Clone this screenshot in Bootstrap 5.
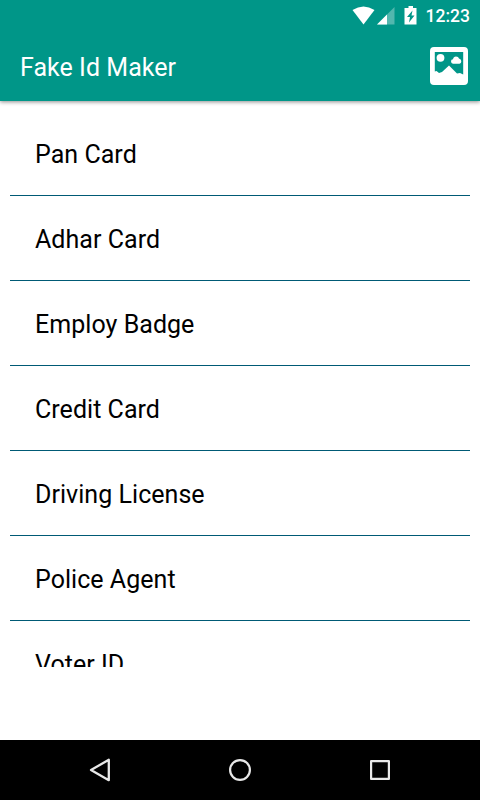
<!DOCTYPE html>
<html lang="en">
<head>
<meta charset="utf-8">
<meta name="viewport" content="width=device-width, initial-scale=1">
<title>Fake Id Maker</title>
<link rel="stylesheet" href="https://cdn.jsdelivr.net/npm/bootstrap@5.3.0/dist/css/bootstrap.min.css">
<style>
body { font-family: Roboto, sans-serif; height: 800px; color: #000; background: #fff; }
svg { display: block; flex: none; }
.app-header { height: 101px; background: #009688; box-shadow: 0 1px 4px rgba(0,0,0,.45); z-index: 1; }
.status-bar { height: 32px; padding-right: 10px; }
.clock { font-size: 17.500px; line-height: 32px; font-weight: 500; margin-left: 8px; }
.app-bar { height: 69px; padding: 0 12px 0 20px; }
.app-title { font-size: 25px; line-height: 30px; margin-top: 2px; letter-spacing: .04px; }
.app-bar svg { margin-top: -1px; }
.menu-list { height: 556px; margin: 10px 10px 0; }
.menu-item { height: 85px; padding: 3px 25px 0; font-size: 25px; letter-spacing: .04px; border-bottom: 1px solid #005a75; flex: none; }
.nav-keys { height: 60px; padding: 0 88px; }
</style>
<script defer src="https://cdn.jsdelivr.net/npm/bootstrap@5.3.0/dist/js/bootstrap.bundle.min.js"></script>
</head>
<body class="d-flex flex-column overflow-hidden">
<header class="app-header position-relative text-white">
  <div class="status-bar d-flex justify-content-end align-items-center">
    <svg width="66" height="32" viewBox="0 0 66 32" fill="#fff">
      <path d="M0.500 10Q11.500 3 22.500 10L11.500 24.500Z"/>
      <path d="M42.500 7V24.500H25Z" opacity=".32"/>
      <path d="M35 14.500V24.500H25Z"/>
      <path fill-rule="evenodd" d="M56.500 6h4.500v2h3.500v16.500h-12V8h4ZM60.500 10.500L55 17h3l-1 5.500l5.500-7h-3Z"/>
    </svg>
    <span class="clock">12:23</span>
  </div>
  <div class="app-bar d-flex justify-content-between align-items-center">
    <h1 class="app-title fw-normal mb-0">Fake Id Maker</h1>
    <svg width="38" height="38" viewBox="0 0 38 38" fill="#fff" role="img" aria-label="Gallery">
      <path fill-rule="evenodd" d="M4 0H34Q38 0 38 4V34Q38 38 34 38H4Q0 38 0 34V4Q0 0 4 0ZM4.800 5V24.500L6.500 24L9 26L12 25L19 18.500L27 26.500L30 26L33.200 27.500V5Z"/>
      <circle cx="10.500" cy="10.800" r="3.900"/>
      <path d="M23 16.800Q21 16.300 21 14.300Q21 12.300 23 12.300Q23.500 9.500 26 9.500Q28.500 9.500 29 11.500Q31.300 12 31.300 14.300Q31.300 16.500 29.500 16.800Z"/>
    </svg>
  </div>
</header>
<main class="menu-list d-flex flex-column overflow-hidden">
  <div class="menu-item d-flex align-items-center">Pan Card</div>
  <div class="menu-item d-flex align-items-center">Adhar Card</div>
  <div class="menu-item d-flex align-items-center">Employ Badge</div>
  <div class="menu-item d-flex align-items-center">Credit Card</div>
  <div class="menu-item d-flex align-items-center">Driving License</div>
  <div class="menu-item d-flex align-items-center">Police Agent</div>
  <div class="menu-item d-flex align-items-center">Voter ID</div>
</main>
<nav class="nav-keys d-flex justify-content-between align-items-center bg-black mt-auto">
  <svg width="24" height="26" viewBox="0 0 24 26" fill="none" stroke="#e8e8e8" stroke-width="2.300" stroke-linejoin="round"><path d="M3 13L20.800 2.800V23.200Z"/></svg>
  <svg width="24" height="24" viewBox="0 0 24 24" fill="none" stroke="#e8e8e8" stroke-width="2.200"><circle cx="12" cy="12" r="9.900"/></svg>
  <svg width="24" height="24" viewBox="0 0 24 24" fill="none" stroke="#e8e8e8" stroke-width="2.200" stroke-linejoin="round"><path d="M3.100 3.100H20.900V20.900H3.100Z"/></svg>
</nav>
</body>
</html>
